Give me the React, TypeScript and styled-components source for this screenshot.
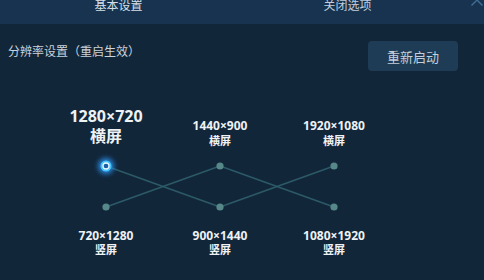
import styled, { createGlobalStyle } from "styled-components";

const GlobalStyle = createGlobalStyle`
  html, body {
    margin: 0;
    padding: 0;
    background: #12263a;
  }
  body {
    font-family: "Noto Sans", "Noto Sans CJK SC", sans-serif;
  }
`;

const Page = styled.div`
  width: 484px;
  height: 280px;
  background: #12263a;
  overflow: hidden;
`;

const Header = styled.div`
  position: relative;
  height: 24px;
  background: #173350;
  display: flex;
  padding-left: 4px;
  overflow: hidden;
`;

const Tab = styled.div<{ $active?: boolean }>`
  width: 229px;
  height: 24px;
  display: flex;
  flex-direction: column;
  align-items: center;
  justify-content: flex-end;
  padding-bottom: 1px;
  box-sizing: border-box;

  & span {
    font-size: 12px;
    line-height: 16px;
    color: ${(p) => (p.$active ? "#d6e0ea" : "#c3cfdb")};
  }

  &::after {
    content: "";
    display: block;
    width: 52px;
    height: 2px;
    margin-top: 9px;
    background: ${(p) => (p.$active ? "#3fbde6" : "transparent")};
  }
`;

const Close = styled.div`
  position: absolute;
  top: -6px;
  right: 1px;
  width: 12px;
  height: 12px;

  & svg {
    display: block;
  }
`;

const SettingRow = styled.div`
  display: flex;
  justify-content: space-between;
  align-items: flex-start;
  padding: 17px 26px 0 8px;
`;

const Label = styled.div`
  margin-top: 3px;
  font-size: 12px;
  line-height: 16px;
  color: #c8d3dd;
`;

const RestartButton = styled.button`
  width: 90px;
  height: 30px;
  border: none;
  border-radius: 4px;
  background: #1e3c55;
  color: #c3d0db;
  font-family: inherit;
  font-size: 13px;
  padding: 0;
`;

const Chart = styled.div`
  display: grid;
  grid-template-columns: repeat(3, 114px);
  padding: 35px 0 0 49px;
`;

const TopCell = styled.div<{ $selected?: boolean }>`
  display: flex;
  flex-direction: column;
  align-items: center;
  justify-content: flex-end;
  color: #eef2f5;
  font-weight: bold;
  font-size: ${(p) => (p.$selected ? "16px" : "12px")};
  line-height: ${(p) => (p.$selected ? "20px" : "15px")};
  margin-bottom: ${(p) => (p.$selected ? "6px" : "4.5px")};

  & small {
    font-size: ${(p) => (p.$selected ? "16px" : "11px")};
  }
`;

const BottomCell = styled.div`
  display: flex;
  flex-direction: column;
  align-items: center;
  margin-top: 6px;
  color: #eef2f5;
  font-weight: bold;
  font-size: 12px;
  line-height: 15px;

  & small {
    font-size: 11px;
    line-height: 14px;
  }
`;

const Lines = styled.svg`
  grid-column: 1 / 4;
  display: block;
`;

const top = [
  { res: "1280×720", selected: true },
  { res: "1440×900" },
  { res: "1920×1080" },
];
const bottom = ["720×1280", "900×1440", "1080×1920"];

const xs = [57, 171, 285];
const yTop = 14;
const yBot = 55;

const App = () => {
  return (
    <Page>
      <GlobalStyle />
      <Header>
        <Tab $active>
          <span>基本设置</span>
        </Tab>
        <Tab>
          <span>关闭选项</span>
        </Tab>
        <Close>
          <svg width="12" height="12" viewBox="0 0 12 12">
            <path d="M0.5 0.5 L11.5 11.5 M11.5 0.5 L0.5 11.5" stroke="#3f6f95" strokeWidth="1.4" />
          </svg>
        </Close>
      </Header>
      <SettingRow>
        <Label>分辨率设置（重启生效）</Label>
        <RestartButton>重新启动</RestartButton>
      </SettingRow>
      <Chart>
        {top.map((t) => (
          <TopCell key={t.res} $selected={t.selected}>
            <div>{t.res}</div>
            <small>横屏</small>
          </TopCell>
        ))}
        <Lines width="342" height="70" viewBox="0 0 342 70">
          <defs>
            <filter id="glow" x="-1" y="-1" width="3" height="3">
              <feGaussianBlur stdDeviation="2.5" />
            </filter>
          </defs>
          <g stroke="#2d5a67" strokeWidth="1.5">
            <line x1={xs[0]} y1={yTop} x2={xs[1]} y2={yBot} />
            <line x1={xs[0]} y1={yBot} x2={xs[1]} y2={yTop} />
            <line x1={xs[1]} y1={yTop} x2={xs[2]} y2={yBot} />
            <line x1={xs[1]} y1={yBot} x2={xs[2]} y2={yTop} />
          </g>
          {xs.map((x, i) => (
            <g key={x} fill="#568789">
              {i > 0 && <circle cx={x} cy={yTop} r="3.6" />}
              <circle cx={x} cy={yBot} r="3.6" />
            </g>
          ))}
          <circle cx={xs[0]} cy={yTop} r="8" fill="#2a9cff" opacity="0.8" filter="url(#glow)" />
          <circle cx={xs[0]} cy={yTop} r="5.5" fill="#45c4ff" />
          <circle cx={xs[0]} cy={yTop} r="3" fill="#1a5fa6" stroke="#e4f7ff" strokeWidth="1.3" />
        </Lines>
        {bottom.map((b) => (
          <BottomCell key={b}>
            <div>{b}</div>
            <small>竖屏</small>
          </BottomCell>
        ))}
      </Chart>
    </Page>
  );
};

export default App;
